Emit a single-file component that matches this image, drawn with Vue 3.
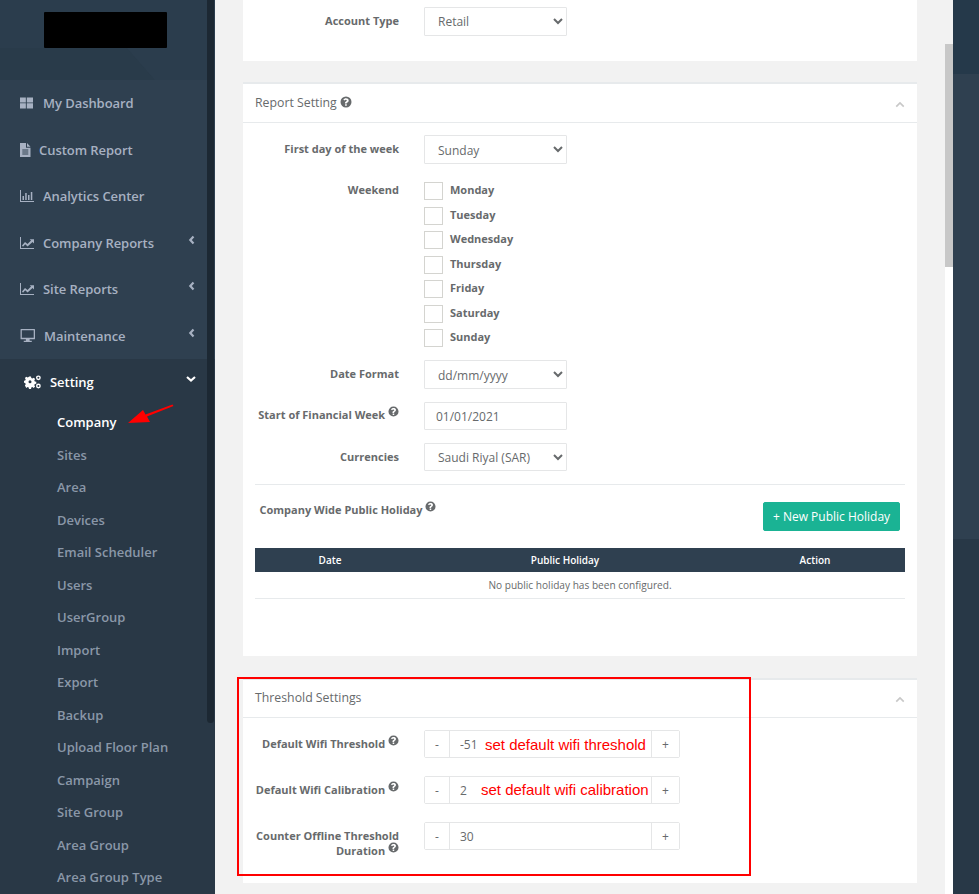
<script setup>
const menu = [
  { label: 'My Dashboard', icon: 'grid' },
  { label: 'Custom Report', icon: 'file' },
  { label: 'Analytics Center', icon: 'bars' },
  { label: 'Company Reports', icon: 'line', arrow: true },
  { label: 'Site Reports', icon: 'line', arrow: true },
  { label: 'Maintenance', icon: 'desktop', arrow: true },
]
const subMenu = ['Company', 'Sites', 'Area', 'Devices', 'Email Scheduler', 'Users', 'UserGroup', 'Import', 'Export', 'Backup', 'Upload Floor Plan', 'Campaign', 'Site Group', 'Area Group', 'Area Group Type']
const weekdays = ['Monday', 'Tuesday', 'Wednesday', 'Thursday', 'Friday', 'Saturday', 'Sunday']
const thresholds = [
  { label: 'Default Wifi Threshold', value: '-51' },
  { label: 'Default Wifi Calibration', value: '2' },
  { label: 'Counter Offline Threshold Duration', value: '30' },
]
</script>

<template>
  <div class="page">
    <aside class="sidebar">
      <div class="brand"><div class="logo"></div></div>
      <nav class="menu">
        <a v-for="item in menu" :key="item.label" class="menu-item">
          <svg class="menu-icon" :class="'i-' + item.icon" :viewBox="item.icon === 'file' ? '0 0 10.5 14' : '0 0 14 14'">
            <path v-if="item.icon === 'grid'" d="M0 1h6.300v5.400H0zM7.300 1H14v5.400H7.300zM0 7.300h6.300V13H0zM7.300 7.300H14V13H7.300z" />
            <path v-else-if="item.icon === 'file'" fill-rule="evenodd" d="M0 0h6v4.800h4.500V14H0zM7 0l3.500 3.700H7zM2.300 6.500v1h6v-1zM2.300 8.500v1h6v-1zM2.300 10.500v1h6v-1z" />
            <path v-else-if="item.icon === 'bars'" d="M0 1h1v11h13v1H0zM2.500 7h1.500v4H2.500zM5.200 4h1.500v7H5.200zM8 6h1.500v5H8zM10.800 3h1.500v8h-1.500z" />
            <path v-else-if="item.icon === 'line'" d="M0 1h1v11h13v1H0zM2 9.500l3-3.500 2.500 2L11 4.500 9.700 3.200H14v4.300L12.500 6 7.600 10.500 5.200 8.300 3 10.700z" />
            <path v-else fill-rule="evenodd" d="M1 1h12.500q.5 0 .5.500v8.500q0 .5-.5.5H9v1.500h2v1H3.500v-1h2v-1.500H1q-.5 0-.5-.5V1.500Q.5 1 1 1zM1.700 2.200v7h11.100v-7z" />
          </svg>
          <span>{{ item.label }}</span>
          <svg v-if="item.arrow" class="caret" viewBox="0 0 8 10"><path d="M5.500 1.500 2.300 5l3.200 3.500" /></svg>
        </a>
        <div class="active-group">
          <a class="menu-item current">
            <svg class="gears" viewBox="0 0 17 14">
              <path fill-rule="evenodd" d="M5 1.500h2l.3 1.500 1.100.5 1.300-.8 1.400 1.400-.8 1.300.5 1.100 1.500.3v2l-1.500.3-.5 1.100.8 1.300-1.400 1.400-1.300-.8-1.100.5-.3 1.500H5l-.3-1.500-1.100-.5-1.300.8L.9 10.500l.8-1.300-.5-1.100L0 7.800v-2l1.200-.3.5-1.100-.8-1.300L2.300 1.700l1.300.8 1.100-.5zM6 5.300a1.500 1.500 0 1 0 0 3 1.500 1.500 0 0 0 0-3z" />
              <circle cx="14.400" cy="2.800" r="1.700" fill="none" stroke="#fff" stroke-width="1.400" />
              <circle cx="14.400" cy="11" r="1.700" fill="none" stroke="#fff" stroke-width="1.400" />
            </svg>
            <span>Setting</span>
            <svg class="caret down" viewBox="0 0 10 8"><path d="M1 2l4 3.500L9 2" /></svg>
          </a>
          <a v-for="(sub, i) in subMenu" :key="sub" class="sub-item" :class="{ on: i === 0 }">{{ sub }}</a>
        </div>
      </nav>
      <div class="side-thumb"></div>
    </aside>

    <main class="content">
      <section class="card first">
        <div class="form-row">
          <label class="label">Account Type</label>
          <select class="control"><option>Retail</option></select>
        </div>
      </section>

      <section class="card report">
        <header class="card-head">
          <h2>Report Setting <svg class="help big" viewBox="0 0 12 12"><use href="#q" /></svg></h2>
          <svg class="collapse" viewBox="0 0 12 8"><path d="M1.500 6.500 6 2l4.500 4.500" /></svg>
        </header>
        <div class="report-body">
          <div class="form-row week-start">
            <label class="label">First day of the week</label>
            <select class="control"><option>Sunday</option></select>
          </div>
          <div class="form-row weekend">
            <label class="label">Weekend</label>
            <div class="days">
              <label v-for="d in weekdays" :key="d" class="day"><span class="box"></span><span class="day-name">{{ d }}</span></label>
            </div>
          </div>
          <div class="form-row date">
            <label class="label">Date Format</label>
            <select class="control"><option>dd/mm/yyyy</option></select>
          </div>
          <div class="form-row fin">
            <label class="label">Start of Financial Week <svg class="help" viewBox="0 0 12 12"><use href="#q" /></svg></label>
            <input class="control text" value="01/01/2021" />
          </div>
          <div class="form-row cur">
            <label class="label">Currencies</label>
            <select class="control"><option>Saudi Riyal (SAR)</option></select>
          </div>
          <hr />
          <div class="holiday-head">
            <span class="label">Company Wide Public Holiday <svg class="help" viewBox="0 0 12 12"><use href="#q" /></svg></span>
            <button class="btn">+ New Public Holiday</button>
          </div>
          <table>
            <thead>
              <tr><th class="c1">Date</th><th>Public Holiday</th><th class="c3">Action</th></tr>
            </thead>
            <tbody>
              <tr><td colspan="3">No public holiday has been configured.</td></tr>
            </tbody>
          </table>
        </div>
      </section>

      <section class="card threshold">
        <header class="card-head">
          <h2>Threshold Settings</h2>
          <svg class="collapse" viewBox="0 0 12 8"><path d="M1.500 6.500 6 2l4.500 4.500" /></svg>
        </header>
        <div class="threshold-body">
          <div v-for="t in thresholds" :key="t.label" class="form-row spin-row">
            <label class="label">{{ t.label }} <svg class="help" viewBox="0 0 12 12"><use href="#q" /></svg></label>
            <div class="spinner">
              <button>-</button>
              <input :value="t.value" />
              <button class="plus">+</button>
            </div>
          </div>
        </div>
      </section>

      <div class="scrollbar"><div class="thumb"></div></div>
    </main>

    <div class="side-peek">
      <div class="peek-top"></div>
      <div class="peek-mid"></div>
    </div>

    <!-- annotations pasted on top of the screenshot -->
    <div class="mark-box"></div>
    <span class="note n1">set default wifi threshold</span>
    <span class="note n2">set default wifi calibration</span>
    <svg class="arrow" viewBox="0 0 50 24"><path d="M3 20 18 7l2.500 4.500L47.500 1.500l1 1.500L22 13.500l3 5.500z" fill="#f00" /></svg>

    <svg width="0" height="0" class="defs">
      <symbol id="q" viewBox="0 0 12 12">
        <path fill-rule="evenodd" d="M6 .5a5.500 5.500 0 1 1 0 11 5.500 5.500 0 0 1 0-11zM5.100 8.300v1.500h1.700V8.300zM6 2.300c-1.300 0-2.100.6-2.700 1.500l1.100.8c.4-.5.800-.8 1.400-.8.600 0 1 .3 1 .7 0 .5-.4.700-.9 1-.7.400-1 .8-1 1.500v.5h1.800c0-.5.100-.7.700-1.100.7-.4 1.300-1 1.300-2 0-1.400-1.300-2.100-2.700-2.100z" />
      </symbol>
    </svg>
  </div>
</template>

<style>
html, body { margin: 0; overflow: hidden; }
</style>

<style scoped>
.page {
  position: relative;
  display: flex;
  width: 979px;
  height: 894px;
  overflow: hidden;
  font-family: "Open Sans", "Liberation Sans", sans-serif;
  color: #676a6c;
  background: #f2f2f2;
}
.defs { position: absolute; }

.sidebar {
  position: relative;
  flex: none;
  width: 215px;
  background: #2f4050;
  overflow: hidden;
}
.side-thumb {
  position: absolute;
  top: 0;
  right: 1px;
  width: 7px;
  height: 723px;
  border-radius: 0 0 4px 4px;
  background: #1c2833;
}
.brand {
  position: relative;
  height: 80px;
  padding-top: 12px;
  box-sizing: border-box;
  background: #2b3d4d;
}
.brand::before {
  content: "";
  position: absolute;
  inset: 0;
  background: #293b4a;
  clip-path: polygon(0 60%, 59% 60%, 72% 100%, 0 100%);
}
.logo {
  position: relative;
  width: 123px;
  height: 36px;
  margin-left: 44px;
  border-radius: 1px;
  background: #000;
}
.menu-item {
  display: flex;
  align-items: center;
  height: 46.5px;
  padding-left: 20px;
  font-size: 13px;
  font-weight: 600;
  letter-spacing: -0.05px;
  color: #a7b1c2;
  position: relative;
}
.menu-icon {
  width: 14px;
  height: 14px;
  margin-right: 9px;
  fill: #a7b1c2;
  flex: none;
}
.i-grid { width: 13px; margin-right: 10px; }
.i-file { width: 10.5px; margin-right: 8.5px; }
.i-desktop { width: 15px; height: 15px; }
.caret {
  position: absolute;
  right: 19px;
  top: 15px;
  width: 8px;
  height: 10px;
  fill: none;
  stroke: #a7b1c2;
  stroke-width: 2.2;
}
.caret.down { width: 10px; height: 8px; top: 16px; right: 19px; stroke: #fff; }
.active-group {
  background: #293846;
  padding-bottom: 40px;
}
.current {
  color: #fff;
  padding-left: 24px;
}
.gears {
  width: 17px;
  height: 14px;
  margin-right: 9px;
  fill: #fff;
}
.sub-item {
  display: block;
  height: 32.5px;
  line-height: 32.5px;
  padding-left: 57px;
  font-size: 13px;
  font-weight: 600;
  color: #8a97a8;
}
.sub-item.on {
  margin-top: 0.5px;
  color: #fff;
}

.content {
  position: relative;
  flex: none;
  width: 738px;
  box-sizing: border-box;
  padding: 0 36px 0 28px;
}
.card {
  background: #fff;
}
.first {
  height: 61px;
  padding-top: 7px;
  box-sizing: border-box;
}
.report {
  margin-top: 21px;
  height: 572px;
  border-top: 2px solid #e7eaec;
}
.threshold {
  margin-top: 22px;
  height: 203px;
  border-top: 2px solid #e7eaec;
}
.card-head {
  display: flex;
  justify-content: space-between;
  align-items: center;
  height: 36px;
  padding: 0 12px 2px;
  border-bottom: 1px solid #e7eaec;
}
.threshold .card-head { height: 35px; }
.card-head h2 {
  margin: 0;
  font-size: 12.3px;
  font-weight: 400;
  color: #676a6c;
}
.collapse {
  position: relative;
  top: 2px;
  width: 10px;
  height: 7px;
  fill: none;
  stroke: #c8c8c8;
  stroke-width: 2;
}
.report-body {
  padding: 12px 12px 0;
}
.form-row {
  display: flex;
  align-items: flex-start;
}
.label {
  font-size: 11px;
  font-weight: 700;
  line-height: 15px;
  color: #676a6c;
}
.form-row > .label {
  flex: none;
  width: 156px;
  margin-right: 25px;
  padding-top: 6px;
  text-align: right;
}
.report-body .form-row > .label {
  width: 144px;
}
.first .form-row > .label {
  width: 156px;
}
.control {
  width: 143px;
  height: 29px;
  padding: 0 9px;
  box-sizing: border-box;
  border: 1px solid #e5e6e7;
  border-radius: 1px;
  background: #fff;
  font: 12px "Open Sans", "Liberation Sans", sans-serif;
  color: #676a6c;
}
.week-start .control, .date .control { padding-top: 2px; }
.text { height: 28px; padding-left: 11px; outline: none; }
.weekend { margin-top: 15px; }
.report-body .weekend > .label { padding-top: 3px; }
.days { display: flex; flex-direction: column; }
.day {
  display: flex;
  align-items: center;
  height: 24.5px;
  font-size: 11px;
  font-weight: 700;
}
.day-name { margin-bottom: 3px; }
.box {
  width: 17px;
  height: 16px;
  margin-right: 7px;
  border: 1px solid #d4d4d0;
  background: #fff;
}
.date { margin-top: 9.5px; }
.fin { margin-top: 13px; }
.report-body .fin > .label { padding-top: 5px; }
.cur { margin-top: 13px; }
.cur .control { height: 28px; }
hr {
  margin: 13px 0 0;
  border: 0;
  border-top: 1px solid #e7eaec;
}
.holiday-head {
  display: flex;
  justify-content: space-between;
  align-items: flex-start;
  padding: 17px 5px 0 4.5px;
}
.btn {
  width: 137px;
  height: 29px;
  border: 1px solid #1ab394;
  border-radius: 2px;
  background: #1ab394;
  color: #fff;
  font: 12px "Open Sans", "Liberation Sans", sans-serif;
}
table {
  width: 650px;
  margin-top: 17px;
  border-collapse: collapse;
  font-size: 10px;
}
th {
  height: 24px;
  padding: 0;
  background: #2f4050;
  color: #fff;
  font-weight: 600;
}
.c1 { width: 150px; }
.c3 { width: 180px; }
td {
  height: 26px;
  padding: 0;
  text-align: center;
  border-bottom: 1px solid #e7eaec;
  color: #676a6c;
  font-size: 10.1px;
}
.threshold-body {
  padding: 12px 0 0;
}
.spin-row {
  margin-bottom: 18px;
}
.spin-row > .label {
  width: 144px;
  margin-left: 12px;
}
.spinner {
  display: flex;
  width: 256px;
  height: 28px;
  box-sizing: border-box;
  border: 1px solid #e5e6e7;
  border-radius: 2px;
}
.spinner button {
  flex: none;
  width: 25px;
  padding: 0;
  border: 0;
  border-right: 1px solid #e5e6e7;
  background: #fff;
  color: #676a6c;
  font: 12px "Open Sans", "Liberation Sans", sans-serif;
}
.spinner .plus {
  width: 28px;
  border-right: 0;
  border-left: 1px solid #e5e6e7;
}
.spinner input {
  flex: 1;
  min-width: 0;
  padding: 0 10px;
  border: 0;
  outline: none;
  color: #676a6c;
  font: 12px "Open Sans", "Liberation Sans", sans-serif;
}
.help {
  position: relative;
  top: -2px;
  width: 11px;
  height: 11px;
  fill: #676a6c;
}
.help.big { top: 1px; width: 12px; height: 12px; }

.scrollbar {
  position: absolute;
  top: 0;
  right: 0;
  width: 8px;
  height: 894px;
  background: #fff;
}
.thumb {
  margin-top: 44px;
  height: 223px;
  background: #c8c8c8;
  box-shadow: 0 -44px 0 #f2f2f2;
}

.side-peek {
  flex: none;
  width: 26px;
  height: 894px;
  background: #283847;
  box-shadow: -2px 0 3px rgba(0, 0, 0, 0.3);
}
.peek-top {
  height: 74px;
  background: #25394a;
}
.peek-mid {
  height: 465px;
  background: #2f4050;
}

.mark-box {
  position: absolute;
  left: 237px;
  top: 677px;
  width: 510px;
  height: 195px;
  border: 2px solid #f00;
}
.note {
  position: absolute;
  color: #f00;
  font: 15px "Liberation Sans", Arial, sans-serif;
  white-space: nowrap;
}
.n1 { left: 485px; top: 736px; }
.n2 { left: 481px; top: 781px; }
.arrow {
  position: absolute;
  left: 125px;
  top: 403px;
  width: 50px;
  height: 24px;
}
</style>
